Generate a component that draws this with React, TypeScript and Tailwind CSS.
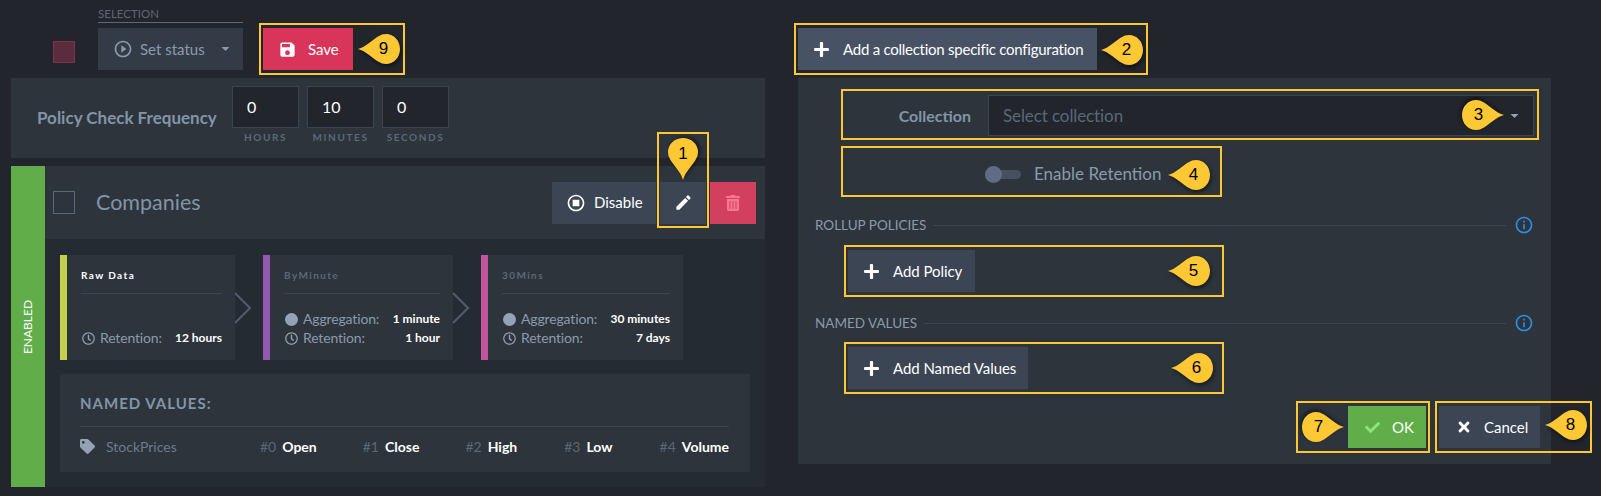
import { FaCheck, FaPlus, FaRegClock, FaTag, FaTimes, FaTrashAlt } from 'react-icons/fa';
import { MdEdit, MdInfoOutline, MdOutlineStopCircle, MdPlayCircleOutline, MdSave } from 'react-icons/md';

const PANEL = 'bg-[#2d343b]';

function Caret({ className }: { className: string }) {
    return (
        <svg width="9" height="4" viewBox="0 0 10 5" className={className}>
            <path d="M0 0h10L5 5z" fill="currentColor" />
        </svg>
    );
}

function Clock() {
    return <FaRegClock className="text-[#93a2b5] text-[13px] shrink-0" />;
}

function Dot() {
    return <span className="w-[13px] h-[13px] rounded-full bg-[#93a2b5] shrink-0" />;
}

function Rule({ title, strip, titleColor, width, aggregation, retention }: {
    title: string;
    strip: string;
    titleColor: string;
    width: string;
    aggregation?: string;
    retention: string;
}) {
    return (
        <div className={`flex h-[105px] ${PANEL} ${width}`}>
            <div className={`w-[7px] ${strip}`} />
            <div className="flex-1 flex flex-col pl-[14px] pr-[13px]">
                <div className={`h-[39px] pt-[13px] text-[10px] leading-[14px] font-bold tracking-[1.4px] border-b border-[#3b4551] ${titleColor}`}>{title}</div>
                <div className="flex-1 flex flex-col justify-end pb-[13px] gap-[1px] text-[14px] leading-[18px] tracking-[-0.15px] text-[#8b9aab]">
                    {aggregation && (
                        <div className="flex items-center pl-[1px]">
                            <Dot />
                            <span className="ml-[5px]">Aggregation:</span>
                            <span className="ml-auto text-white text-[12px] font-bold tracking-normal">{aggregation}</span>
                        </div>
                    )}
                    <div className="flex items-center pl-[1px]">
                        <Clock />
                        <span className="ml-[5px]">Retention:</span>
                        <span className="ml-auto text-white text-[12px] font-bold tracking-normal">{retention}</span>
                    </div>
                </div>
            </div>
        </div>
    );
}

function Chevron() {
    return (
        <svg width="28" height="32" viewBox="0 0 28 32" className="shrink-0 text-[#525e6d]">
            <path d="M0 1l15 15L0 31" fill="none" stroke="currentColor" strokeWidth="2" />
        </svg>
    );
}

function NamedValue({ index, name, className }: { index: string; name: string; className: string }) {
    return (
        <div className={`flex gap-[6px] ${className}`}>
            <span className="text-[#5b6878]">{index}</span>
            <span className="text-white font-bold">{name}</span>
        </div>
    );
}

function TimeInput({ value, label, valueClass }: { value: string; label: string; valueClass: string }) {
    return (
        <div className="flex flex-col items-center w-[67px]">
            <div className={`w-full h-[42px] bg-[#22252c] border border-[#3b4551] text-white text-[16px] leading-[40px] ${valueClass}`}>{value}</div>
            <div className="mt-[2px] text-[10px] leading-[14px] font-bold tracking-[1.6px] text-[#5b6878]">{label}</div>
        </div>
    );
}

function Heading({ label }: { label: string }) {
    return (
        <div className="flex items-center h-[20px] ml-[17px] mr-[17px]">
            <span className="text-[13.5px] text-[#8b9aab] mr-[7px]">{label}</span>
            <span className="flex-1 h-px bg-[#3b4551]" />
            <MdInfoOutline className="ml-[8px] text-[20px] text-[#2a8fe8]" />
        </div>
    );
}

function AddButton({ label, width }: { label: string; width: string }) {
    return (
        <button className={`flex items-center h-[42px] pl-[15px] bg-[#3b4554] text-white text-[15px] tracking-[-0.05px] ${width}`}>
            <FaPlus className="text-[17px] mr-[13px]" />
            {label}
        </button>
    );
}

function Box({ className }: { className: string }) {
    return <div className={`absolute border-2 border-[#fec834] pointer-events-none ${className}`} />;
}

// teardrop callout, drawn pointing left and turned for the other directions
function Pin({ n, className, turn = '', numClass = 'w-[33px]' }: { n: string; className: string; turn?: string; numClass?: string }) {
    return (
        <div className={`absolute w-[42px] h-[30px] flex items-center ${className}`}>
            <svg width="42" height="30" viewBox="0 0 42 30" className={`absolute inset-0 drop-shadow-[1px_2px_2px_rgba(0,0,0,0.55)] ${turn}`}>
                <path d="M0 15C8 13 14 6 20 2.500C23 .8 25 0 28 0C36 0 42 6.700 42 15S36 30 28 30C25 30 23 29.200 20 27.500C14 24 8 17 0 15z" fill="#fec834" />
            </svg>
            <span className={`relative text-center text-[17px] text-black font-['Liberation_Sans',sans-serif] ${numClass}`}>{n}</span>
        </div>
    );
}

export default function App() {
    return (
        <div className="relative w-[1601px] h-[496px] overflow-hidden flex bg-[#22252c] text-[#8b9aab] font-['Lato',sans-serif]">
            <div className="w-[754px] ml-[11px] shrink-0">
                <div className="h-[78px] flex pt-[8px]">
                    <div className="w-[22px] h-[22px] mt-[33px] ml-[42px] bg-[#5b2b3e] border border-[#80304a]" />
                    <div className="w-[145px] ml-[23px]">
                        <div className="h-[15px] border-b border-[#5b6878] text-[11.500px] leading-[12px] text-[#5b6878]">SELECTION</div>
                        <button className="w-full h-[42px] mt-[5px] flex items-center pl-[15px] bg-[#333b47] text-[15px]">
                            <MdPlayCircleOutline className="text-[20px] mr-[7px]" />
                            Set status
                            <Caret className="ml-[16px]" />
                        </button>
                    </div>
                    <button className="w-[90px] h-[42px] mt-[20px] ml-[20px] flex items-center pl-[15px] bg-[#d9345a] text-white text-[15px]">
                        <MdSave className="text-[19px] mr-[11px]" />
                        Save
                    </button>
                </div>

                <div className={`h-[80px] flex ${PANEL}`}>
                    <div className="w-[221px] pl-[26px] pt-[27px] text-[17px] leading-[26px] font-bold text-[#8195a9]">Policy Check Frequency</div>
                    <div className="flex gap-[8px] pt-[8px]">
                        <TimeInput value="0" label="HOURS" valueClass="pl-[14px]" />
                        <TimeInput value="10" label="MINUTES" valueClass="pl-[14px]" />
                        <TimeInput value="0" label="SECONDS" valueClass="pl-[14px]" />
                    </div>
                </div>

                <div className="h-[321px] mt-[8px] flex">
                    <div className="w-[34px] flex items-center justify-center bg-[#60ad4a]">
                        <span className="-rotate-90 text-[12px] text-white">ENABLED</span>
                    </div>
                    <div className="flex-1 flex flex-col bg-[#252b32]">
                        <div className={`h-[73px] flex items-center pl-[8px] pr-[9px] ${PANEL}`}>
                            <div className="w-[22px] h-[23px] border border-[#5b6878]" />
                            <div className="ml-[21px] text-[21.500px] text-[#8195a9]">Companies</div>
                            <button className="ml-auto w-[104px] h-[42px] flex items-center pl-[14px] bg-[#3b4554] text-white text-[15px]">
                                <MdOutlineStopCircle className="text-[20px] mr-[8px]" />
                                Disable
                            </button>
                            <button className="w-[46px] h-[42px] ml-[4px] flex items-center justify-center bg-[#3b4554] text-white">
                                <MdEdit className="text-[19px]" />
                            </button>
                            <button className="w-[46px] h-[42px] ml-[4px] flex items-center justify-center bg-[#d33f5f] text-[#f77790]">
                                <FaTrashAlt className="text-[16px]" />
                            </button>
                        </div>

                        <div className="pl-[15px] pt-[16px]">
                            <div className="flex items-center">
                                <Rule title="Raw Data" strip="bg-[#c4d04d]" titleColor="text-white" width="w-[175px]" retention="12 hours" />
                                <Chevron />
                                <Rule title="ByMinute" strip="bg-[#9358b0]" titleColor="text-[#5b6878]" width="w-[190px]" aggregation="1 minute" retention="1 hour" />
                                <Chevron />
                                <Rule title="30Mins" strip="bg-[#c0549f]" titleColor="text-[#5b6878]" width="w-[202px]" aggregation="30 minutes" retention="7 days" />
                            </div>

                            <div className={`w-[690px] h-[98px] mt-[14px] pl-[20px] pr-[21px] pt-[18px] ${PANEL}`}>
                                <div className="h-[35px] border-b border-[#3b4551] text-[15px] leading-[22px] font-bold tracking-[1px] text-[#8195a9]">NAMED VALUES:</div>
                                <div className="flex items-center h-[39px] text-[14px]">
                                    <FaTag className="text-[15px] text-[#93a2b5]" />
                                    <span className="ml-[11px] text-[#6d7b8b]">StockPrices</span>
                                    <NamedValue index="#0" name="Open" className="ml-auto" />
                                    <NamedValue index="#1" name="Close" className="ml-[46px]" />
                                    <NamedValue index="#2" name="High" className="ml-[46px]" />
                                    <NamedValue index="#3" name="Low" className="ml-[47px]" />
                                    <NamedValue index="#4" name="Volume" className="ml-[47px]" />
                                </div>
                            </div>
                        </div>
                    </div>
                </div>
            </div>

            <div className="w-[753px] ml-[33px] shrink-0 pt-[28px]">
                <button className="flex items-center w-[299px] h-[42px] pl-[15px] bg-[#475264] text-white text-[15px] tracking-[-0.25px]">
                    <FaPlus className="text-[17px] mr-[13px]" />
                    Add a collection specific configuration
                </button>
                <div className={`h-[386px] mt-[8px] ${PANEL}`}>
                    <div className="flex items-center pt-[17px] pr-[17px]">
                        <div className="w-[190px] pr-[17px] text-right text-[16px] font-bold text-[#8195a9]">Collection</div>
                        <div className="flex-1 h-[41px] flex items-center px-[14px] bg-[#22252c] border border-[#3b4551] text-[17px] tracking-[-0.1px] text-[#5b6878]">
                            Select collection
                            <Caret className="ml-auto text-[#93a2b5]" />
                        </div>
                    </div>
                    <div className="flex items-center h-[22px] mt-[27px] ml-[187px]">
                        <div className="relative w-[36px] h-[9px] rounded-full bg-[#46505e]">
                            <span className="absolute left-0 -top-[4px] w-[17px] h-[17px] rounded-full bg-[#5f6c83]" />
                        </div>
                        <span className="ml-[13px] text-[17px]">Enable Retention</span>
                    </div>
                    <div className="mt-[30px]"><Heading label="ROLLUP POLICIES" /></div>
                    <div className="ml-[50px] mt-[15px]"><AddButton label="Add Policy" width="w-[127px]" /></div>
                    <div className="mt-[21px]"><Heading label="NAMED VALUES" /></div>
                    <div className="ml-[50px] mt-[14px]"><AddButton label="Add Named Values" width="w-[180px]" /></div>
                    <div className="flex justify-end mt-[17px] mr-[11px] gap-[13px]">
                        <button className="w-[78px] h-[42px] flex items-center pl-[17px] bg-[#60ad4a] text-white text-[15px]">
                            <FaCheck className="text-[15px] text-[#8ee47c] mr-[12px]" />
                            OK
                        </button>
                        <button className="w-[101px] h-[42px] flex items-center pl-[17px] bg-[#3b4554] text-white text-[15px]">
                            <FaTimes className="text-[16px] mr-[12px]" />
                            Cancel
                        </button>
                    </div>
                </div>
            </div>

            <Box className="left-[259px] top-[23px] w-[146px] h-[52px]" />
            <Box className="left-[657px] top-[132px] w-[52px] h-[96px]" />
            <Box className="left-[794px] top-[23px] w-[354px] h-[52px]" />
            <Box className="left-[841px] top-[89px] w-[698px] h-[51px]" />
            <Box className="left-[841px] top-[146px] w-[381px] h-[51px]" />
            <Box className="left-[844px] top-[245px] w-[380px] h-[52px]" />
            <Box className="left-[844px] top-[342px] w-[380px] h-[52px]" />
            <Box className="left-[1296px] top-[401px] w-[134px] h-[52px]" />
            <Box className="left-[1435px] top-[401px] w-[157px] h-[52px]" />

            <Pin n="9" className="left-[358px] top-[34px] justify-end" />
            <Pin n="1" className="left-[662px] top-[144px]" turn="rotate-[-90deg]" numClass="w-[42px] -translate-y-[5px]" />
            <Pin n="2" className="left-[1101px] top-[35px] justify-end" />
            <Pin n="3" className="left-[1462px] top-[100px]" turn="rotate-180" />
            <Pin n="4" className="left-[1168px] top-[160px] justify-end" />
            <Pin n="5" className="left-[1168px] top-[256px] justify-end" />
            <Pin n="6" className="left-[1171px] top-[353px] justify-end" />
            <Pin n="7" className="left-[1302px] top-[412px]" turn="rotate-180" />
            <Pin n="8" className="left-[1545px] top-[410px] justify-end" />
        </div>
    );
}
